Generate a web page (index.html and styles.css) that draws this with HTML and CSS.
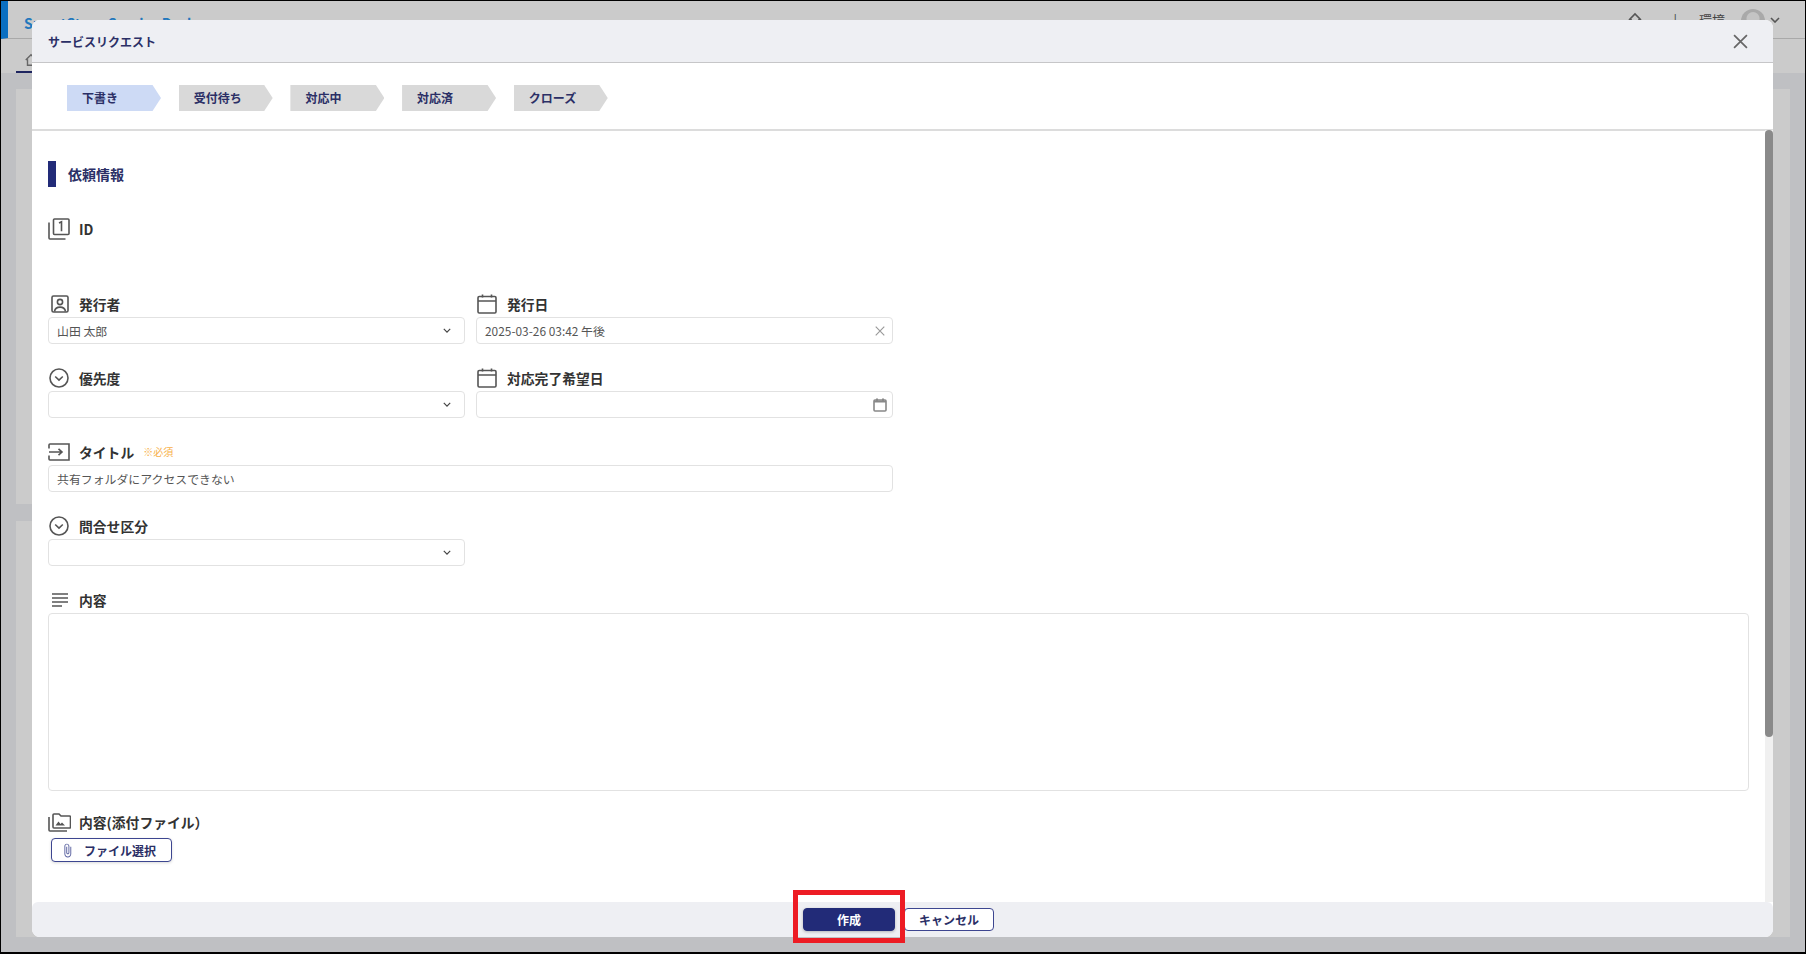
FILE: index.html
```html
<!DOCTYPE html>
<html lang="ja">
<head>
    <meta charset="UTF-8">
    <title>サービスリクエスト</title>
    <link rel="stylesheet" href="styles.css">
</head>
<body>
    <svg class="icon-defs">
        <symbol id="i-filter" viewBox="0 0 22 22"><path d="M1 4.500V20a1 1 0 0 0 1 1h15.500M6.500 1h13.500a1 1 0 0 1 1 1v13.500a1 1 0 0 1-1 1H6.500a1 1 0 0 1-1-1V2a1 1 0 0 1 1-1zM11 5l2.500-1.200v9.500"/></symbol>
        <symbol id="i-account" viewBox="0 0 18 18"><rect x="1" y="1" width="16" height="16" rx="1.500"/><circle cx="9" cy="7" r="2.600"/><path d="M3.500 16.500c.5-3 3-4.400 5.500-4.400s5 1.400 5.500 4.400"/></symbol>
        <symbol id="i-calendar" viewBox="0 0 20 20"><rect x="1" y="2.500" width="18" height="16.500" rx="1.200"/><path d="M1 7h18M5.500 .5v3M14.500 .5v3"/></symbol>
        <symbol id="i-select" viewBox="0 0 20 20"><circle cx="10" cy="10" r="9"/><path d="M6.200 8.500l3.800 3.600 3.800-3.600"/></symbol>
        <symbol id="i-input" viewBox="0 0 22 18"><path d="M1 5.500V2a1 1 0 0 1 1-1h19v16H2a1 1 0 0 1-1-1v-3.500M1 9h12.500M10.500 5.800L14 9l-3.500 3.200"/></symbol>
        <symbol id="i-lines" viewBox="0 0 16 14"><path d="M0 1h16M0 5h16M0 9h16M0 13h10"/></symbol>
        <symbol id="i-media" viewBox="0 0 23 20"><path d="M1 5v13a1 1 0 0 0 1 1h17"/><path d="M5 3a1 1 0 0 1 1-1h5l2 2h8.500a1 1 0 0 1 1 1v10a1 1 0 0 1-1 1H6a1 1 0 0 1-1-1z"/><path class="solid" d="M7.500 13.500l3-4 2 2.500 1.500-1.500 3 3z"/></symbol>
        <symbol id="i-clip" viewBox="0 0 24 24"><path class="solid" d="M16.500 6v11.500c0 2.210-1.790 4-4 4s-4-1.790-4-4V5c0-1.380 1.120-2.500 2.500-2.500s2.500 1.120 2.500 2.500v10.500c0 .550-.450 1-1 1s-1-.450-1-1V6H10v9.500c0 1.380 1.120 2.500 2.500 2.500s2.500-1.120 2.500-2.500V5c0-2.210-1.790-4-4-4S7 2.790 7 5v12.500c0 3.040 2.460 5.500 5.500 5.500s5.500-2.460 5.500-5.500V6h-1.500z"/></symbol>
        <symbol id="i-chevron" viewBox="0 0 10 6"><path d="M1 1l4 4 4-4"/></symbol>
        <symbol id="i-close" viewBox="0 0 14 14"><path d="M1 1l12 12M13 1L1 13"/></symbol>
        <symbol id="i-small-cal" viewBox="0 0 14 14"><rect x="1" y="2" width="12" height="11" rx="1"/><path class="thick" d="M1 3.500h12M4 .5v2M10 .5v2"/></symbol>
        <symbol id="i-home" viewBox="0 0 16 16"><path d="M2 8l6-6 6 6M4 7v7h8V7"/></symbol>
    </svg>

    <div class="screen">
        <!-- dimmed application behind the dialog -->
        <div class="app">
            <div class="app-header">
                <div class="brand">SmartStage Service Desk</div>
                <div class="app-tools">
                    <svg class="tool-icon"><use href="#i-home"/></svg>
                    <span class="tool-bar">|</span>
                    <span class="tool-env">環境</span>
                    <span class="avatar"></span>
                    <svg class="tool-chevron"><use href="#i-chevron"/></svg>
                </div>
            </div>
            <div class="app-tabs">
                <div class="tab"><svg class="tab-icon"><use href="#i-home"/></svg></div>
            </div>
            <div class="app-main">
                <div class="app-side">
                    <div class="app-card app-card-top"></div>
                    <div class="app-card"></div>
                </div>
                <div class="app-card"></div>
            </div>
        </div>

        <div class="modal">
            <div class="modal-header">
                <h2 class="modal-title">サービスリクエスト</h2>
                <svg class="modal-close"><use href="#i-close"/></svg>
            </div>

            <div class="stepper">
                <div class="step active">下書き</div>
                <div class="step">受付待ち</div>
                <div class="step">対応中</div>
                <div class="step">対応済</div>
                <div class="step">クローズ</div>
            </div>

            <div class="modal-body">
                <div class="form-pane">
                    <h3 class="section-title">依頼情報</h3>

                    <div class="field field-id">
                        <div class="field-label"><span class="icon-slot"><svg class="ic-filter"><use href="#i-filter"/></svg></span><label>ID</label></div>
                    </div>

                    <div class="form-row">
                        <div class="field">
                            <div class="field-label"><span class="icon-slot"><svg class="ic-account"><use href="#i-account"/></svg></span><label>発行者</label></div>
                            <div class="control">山田 太郎<svg class="chevron"><use href="#i-chevron"/></svg></div>
                        </div>
                        <div class="field">
                            <div class="field-label"><span class="icon-slot"><svg class="ic-calendar"><use href="#i-calendar"/></svg></span><label>発行日</label></div>
                            <div class="control">2025-03-26 03:42 午後<svg class="clear"><use href="#i-close"/></svg></div>
                        </div>
                    </div>

                    <div class="form-row">
                        <div class="field">
                            <div class="field-label"><span class="icon-slot"><svg class="ic-select"><use href="#i-select"/></svg></span><label>優先度</label></div>
                            <div class="control"><svg class="chevron"><use href="#i-chevron"/></svg></div>
                        </div>
                        <div class="field">
                            <div class="field-label"><span class="icon-slot"><svg class="ic-calendar"><use href="#i-calendar"/></svg></span><label>対応完了希望日</label></div>
                            <div class="control"><svg class="small-cal"><use href="#i-small-cal"/></svg></div>
                        </div>
                    </div>

                    <div class="field field-wide">
                        <div class="field-label"><span class="icon-slot"><svg class="ic-input"><use href="#i-input"/></svg></span><label>タイトル</label><span class="required">※必須</span></div>
                        <div class="control">共有フォルダにアクセスできない</div>
                    </div>

                    <div class="form-row">
                        <div class="field">
                            <div class="field-label"><span class="icon-slot"><svg class="ic-select"><use href="#i-select"/></svg></span><label>問合せ区分</label></div>
                            <div class="control"><svg class="chevron"><use href="#i-chevron"/></svg></div>
                        </div>
                    </div>

                    <div class="field field-content">
                        <div class="field-label"><span class="icon-slot"><svg class="ic-lines"><use href="#i-lines"/></svg></span><label>内容</label></div>
                        <div class="control control-area"></div>
                    </div>

                    <div class="field">
                        <div class="field-label"><span class="icon-slot"><svg class="ic-media"><use href="#i-media"/></svg></span><label>内容(添付ファイル）</label></div>
                        <button class="btn-file"><svg class="ic-clip"><use href="#i-clip"/></svg>ファイル選択</button>
                    </div>
                </div>
                <div class="scroll-track"><div class="scroll-thumb"></div></div>
            </div>

            <div class="modal-footer">
                <button class="btn btn-primary">作成</button>
                <button class="btn btn-outline">キャンセル</button>
            </div>
        </div>

        <div class="callout"></div>
    </div>
</body>
</html>
```

FILE: styles.css
```css
:root {
    --navy: #222b78;
    --navy-text: #2b2f66;
    --panel: #eeeff3;
    --line: #e2e2e2;
    --icon: #555;
}

* {
    box-sizing: border-box;
}

body {
    margin: 0;
    font-family: "Noto Sans CJK JP", "Noto Sans", sans-serif;
    background: #000;
}

.icon-defs {
    display: none;
}

svg {
    fill: none;
    stroke: var(--icon);
    stroke-width: 1.6;
    display: block;
}

.solid {
    fill: currentColor;
    stroke: none;
}

.thick {
    stroke-width: 2;
}

.screen {
    position: relative;
    width: 1806px;
    height: 954px;
    border: 1px solid #000;
    border-bottom-width: 2px;
    overflow: hidden;
}

/* background application */
.app {
    height: 100%;
    display: flex;
    flex-direction: column;
    background: #cbcbcb;
}

.app-header {
    height: 38px;
    display: flex;
    align-items: center;
    justify-content: space-between;
    padding: 0 25px 0 16px;
    border-left: 7px solid #0a6fc2;
    border-bottom: 1px solid #a9a9a9;
}

.brand {
    margin-top: 6px;
    font-size: 14px;
    font-weight: 700;
    color: #2378bd;
}

.app-tools {
    display: flex;
    align-items: center;
    font-size: 13px;
    color: #444;
}

.tool-icon {
    width: 16px;
    height: 16px;
    margin-right: 30px;
}

.tool-bar {
    margin-right: 22px;
}

.tool-env {
    margin-right: 16px;
}

.avatar {
    width: 24px;
    height: 24px;
    margin-top: 2px;
    border-radius: 50%;
    background: radial-gradient(circle at 50% 40%, #c4c4c4 0 6px, #a9a9a9 7px);
}

.tool-chevron {
    width: 10px;
    height: 6px;
    margin-left: 5px;
}

.app-tabs {
    height: 34px;
    padding-left: 15px;
}

.tab {
    width: 40px;
    height: 34px;
    padding: 14px 0 0 8px;
    border-bottom: 2px solid #1e2560;
}

.tab-icon {
    width: 14px;
    height: 14px;
    stroke: #666;
}

.app-main {
    flex: 1;
    min-height: 0;
    display: flex;
    background: #bfc0c3;
    padding: 16px 15px 15px;
}

.app-side {
    width: 100px;
    display: flex;
    flex-direction: column;
    gap: 17px;
}

.app-card {
    flex: 1;
    background: #cbcbcb;
}

.app-card-top {
    flex: none;
    height: 415px;
}

/* dialog */
.modal {
    position: absolute;
    left: 31px;
    top: 19px;
    width: 1741px;
    height: 917px;
    display: flex;
    flex-direction: column;
    background: #fff;
    border-radius: 8px;
}

.modal-header {
    height: 43px;
    display: flex;
    align-items: center;
    justify-content: space-between;
    padding: 0 25px 0 16px;
    background: var(--panel);
    border-bottom: 1px solid #c6c6c8;
    border-radius: 8px 8px 0 0;
}

.modal-title {
    margin: 0;
    font-size: 12px;
    font-weight: 700;
    color: var(--navy-text);
}

.modal-close {
    width: 15px;
    height: 15px;
    stroke: #666;
}

.stepper {
    height: 68px;
    display: flex;
    align-items: center;
    gap: 17.7px;
    padding: 4px 35px 0;
    border-bottom: 2px solid #dcdcdc;
}

.step {
    width: 94px;
    height: 26px;
    padding-left: 15px;
    background: #d9d9d9;
    font-size: 12px;
    font-weight: 700;
    line-height: 26px;
    color: var(--navy-text);
    clip-path: polygon(0 0, 91% 0, 100% 50%, 91% 100%, 0 100%);
}

.step.active {
    background: #cddaf5;
}

.modal-body {
    flex: 1;
    min-height: 0;
    display: flex;
}

.form-pane {
    flex: 1;
    padding: 30px 16px 0;
    overflow: hidden;
}

.section-title {
    height: 26px;
    margin: 0 0 31px;
    padding-left: 12px;
    border-left: 8px solid var(--navy);
    font-size: 14px;
    font-weight: 700;
    line-height: 26px;
    color: var(--navy-text);
}

.scroll-track {
    width: 8px;
    margin-top: -1px;
    background: #f0f0f0;
}

.scroll-thumb {
    height: 607px;
    background: #8a8a8a;
    border-radius: 4px;
}

.form-row {
    display: grid;
    grid-template-columns: 417px 417px;
    column-gap: 11px;
}

.field {
    margin-bottom: 23px;
}

.field-id {
    height: 52px;
}

.field-wide {
    width: 845px;
}

.field-content {
    margin-bottom: 20px;
}

.field-label {
    height: 24px;
    padding-bottom: 3px;
    display: flex;
    align-items: center;
    font-size: 13.8px;
    font-weight: 700;
    color: #333;
}

.icon-slot {
    width: 31px;
    flex: none;
}

.ic-filter {
    width: 22px;
    height: 22px;
}

.ic-account {
    width: 18px;
    height: 18px;
    margin-left: 3px;
}

.ic-calendar {
    width: 20px;
    height: 20px;
    margin-left: 1px;
}

.ic-select {
    width: 20px;
    height: 20px;
    margin-left: 1px;
}

.ic-input {
    width: 22px;
    height: 18px;
}

.ic-lines {
    width: 16px;
    height: 14px;
    margin-left: 4px;
}

.ic-media {
    width: 23px;
    height: 20px;
    color: var(--icon);
}

.required {
    margin-left: 9px;
    font-size: 10px;
    font-weight: 400;
    color: #f7b04a;
}

.control {
    position: relative;
    height: 27px;
    padding-left: 8px;
    border: 1px solid var(--line);
    border-radius: 4px;
    background: #fff;
    font-size: 11.9px;
    line-height: 25px;
    color: #555;
}

.control-area {
    height: 178px;
}

.chevron {
    position: absolute;
    right: 13px;
    top: 10px;
    width: 8px;
    height: 5px;
    stroke: #444;
    stroke-width: 1.5;
}

.clear {
    position: absolute;
    right: 7px;
    top: 8px;
    width: 10px;
    height: 10px;
    stroke: #999;
}

.small-cal {
    position: absolute;
    right: 5px;
    top: 6px;
    width: 14px;
    height: 14px;
    stroke: #888;
}

.btn-file {
    width: 121px;
    height: 24px;
    margin: 3px 0 0 3px;
    padding: 0 0 0 8px;
    display: flex;
    align-items: center;
    gap: 9px;
    border: 1px solid #3d4690;
    border-radius: 4px;
    background: #fff;
    box-shadow: 0 1px 3px rgba(0, 0, 0, 0.15);
    font-family: inherit;
    font-size: 12px;
    font-weight: 700;
    color: var(--navy-text);
}

.ic-clip {
    width: 15px;
    height: 15px;
    color: #5a62a0;
}

.modal-footer {
    height: 35px;
    display: flex;
    align-items: center;
    justify-content: center;
    gap: 9px;
    padding-right: 8px;
    background: var(--panel);
    border-radius: 6px 6px 8px 8px;
}

.btn {
    height: 23px;
    padding: 0;
    border-radius: 4px;
    font-family: inherit;
    font-size: 12px;
    font-weight: 700;
}

.btn-primary {
    width: 92px;
    border: 1px solid var(--navy);
    background: var(--navy);
    color: #fff;
    box-shadow: 0 1px 3px rgba(0, 0, 0, 0.25);
}

.btn-outline {
    width: 90px;
    border: 1px solid #3d4690;
    background: #fff;
    color: var(--navy-text);
}

/* red annotation drawn on the screenshot */
.callout {
    position: absolute;
    left: 792px;
    top: 889px;
    width: 112px;
    height: 53px;
    border: 5px solid #ed1c24;
}
```
